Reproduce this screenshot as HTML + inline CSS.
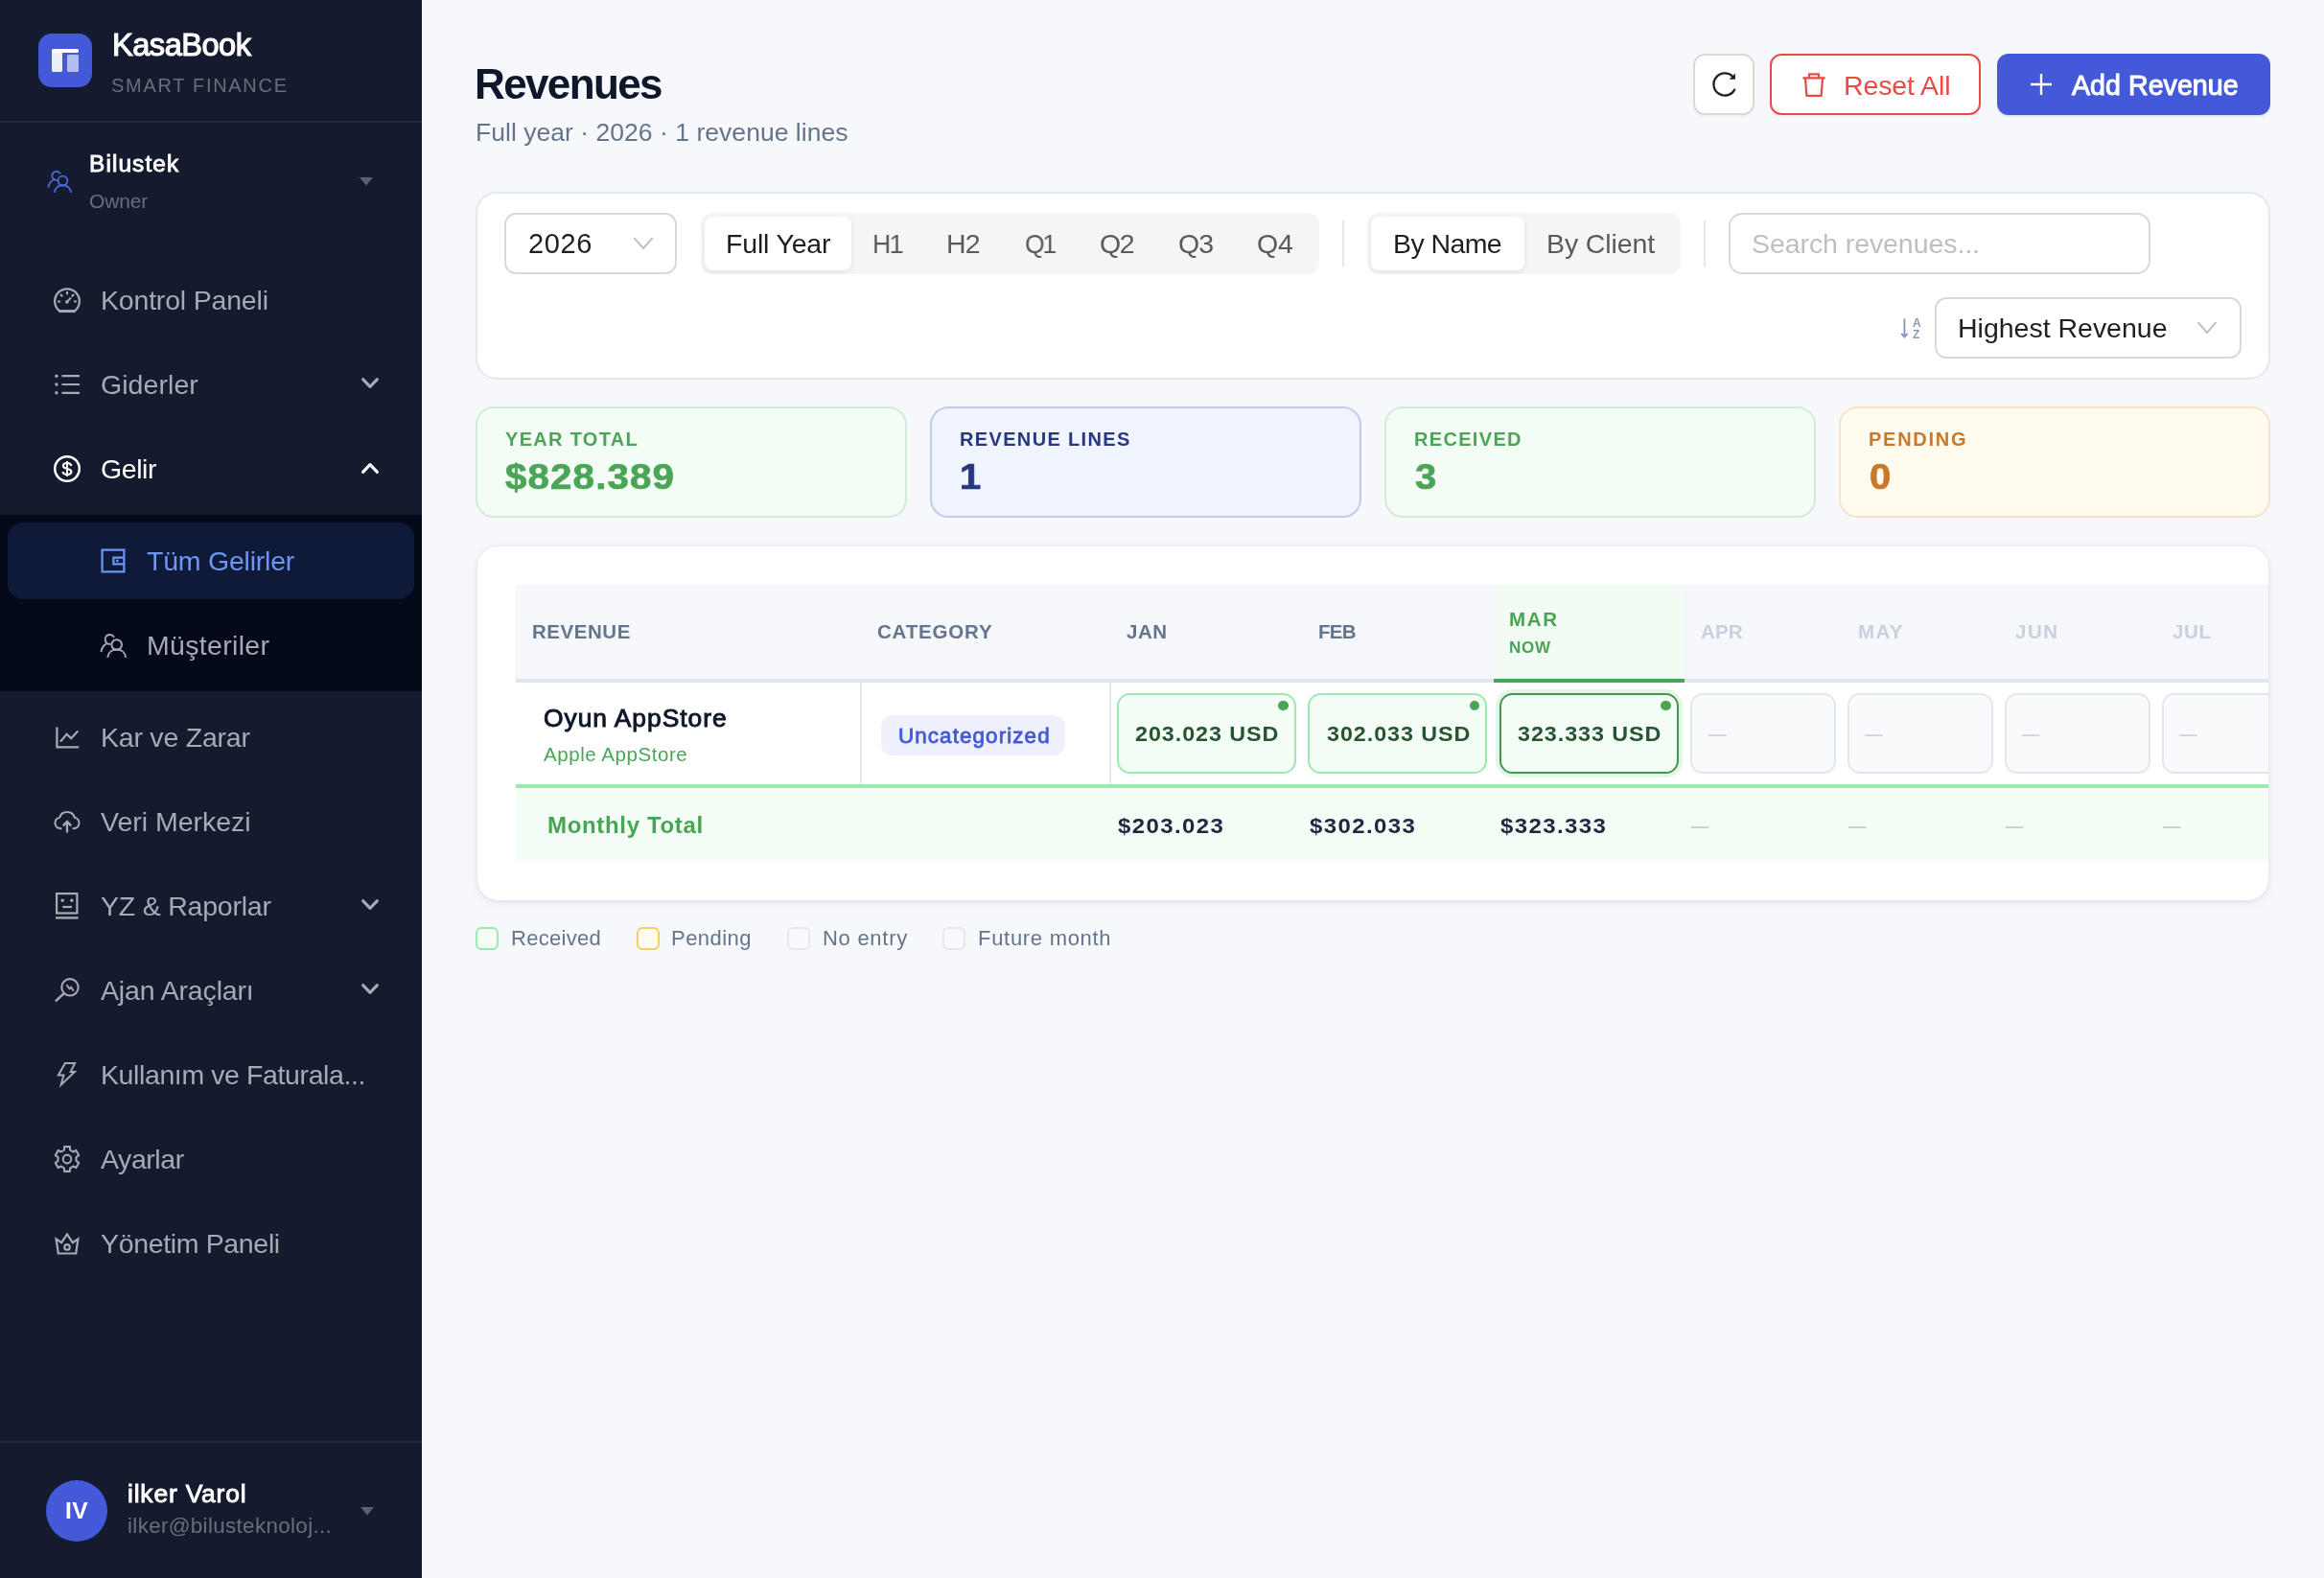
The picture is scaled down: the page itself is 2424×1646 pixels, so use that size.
<!DOCTYPE html><html lang="tr"><head><meta charset="utf-8"><title>KasaBook - Revenues</title><style>
html,body{margin:0;padding:0}
body{width:2424px;height:1646px;overflow:hidden;background:#f7f8fc;position:relative;font-family:"Liberation Sans",sans-serif;}
#side{position:absolute;left:0;top:0;width:440px;height:1646px;background:#151b2e;overflow:hidden}
#main{position:absolute;left:0;top:0;width:2424px;height:1646px;}
.t{position:absolute;white-space:nowrap;display:block;will-change:transform}
.ic{display:block;overflow:visible}
.chev{display:block}
#t1{letter-spacing:-0.502px}#t2{letter-spacing:1.698px}#t3{letter-spacing:1.113px}#t4{letter-spacing:-0.14px}#t5{letter-spacing:-0.189px}#t6{letter-spacing:0.061px}#t7{letter-spacing:-0.422px}#t8{letter-spacing:-0.224px}#t9{letter-spacing:0.321px}#t10{letter-spacing:-0.226px}#t11{letter-spacing:-0.009px}#t12{letter-spacing:-0.214px}#t13{letter-spacing:-0.149px}#t14{letter-spacing:-0.393px}#t15{letter-spacing:-0.428px}#t16{letter-spacing:-0.346px}#t17{letter-spacing:0.35px}#t18{letter-spacing:0.822px}#t19{letter-spacing:0.339px}#t20{letter-spacing:-1.627px}#t21{letter-spacing:0.033px}#t22{letter-spacing:-0.123px}#t23{letter-spacing:0.032px}#t24{letter-spacing:0.595px}#t25{letter-spacing:-0.178px}#t26{letter-spacing:-1.706px}#t27{letter-spacing:-0.737px}#t28{letter-spacing:-2.332px}#t29{letter-spacing:-1.531px}#t30{letter-spacing:-1.031px}#t31{letter-spacing:-0.231px}#t32{letter-spacing:-0.584px}#t33{letter-spacing:-0.106px}#t34{letter-spacing:-0.072px}#t37{letter-spacing:-0.01px}#t38{letter-spacing:1.307px}#t39{letter-spacing:1.02px}#t40{letter-spacing:1.345px}#t42{letter-spacing:1.321px}#t44{letter-spacing:1.729px}#t46{letter-spacing:0.548px}#t47{letter-spacing:0.813px}#t48{letter-spacing:0.492px}#t49{letter-spacing:-0.7px}#t50{letter-spacing:1.656px}#t51{letter-spacing:0.727px}#t52{letter-spacing:0.102px}#t53{letter-spacing:1.406px}#t54{letter-spacing:1.492px}#t55{letter-spacing:0.633px}#t56{letter-spacing:0.967px}#t57{letter-spacing:0.555px}#t58{letter-spacing:1.101px}#t59{letter-spacing:0.885px}#t60{letter-spacing:0.885px}#t61{letter-spacing:0.885px}#t66{letter-spacing:0.666px}#t67{letter-spacing:1.281px}#t68{letter-spacing:1.281px}#t69{letter-spacing:1.281px}#t74{letter-spacing:0.297px}#t75{letter-spacing:0.458px}#t76{letter-spacing:0.721px}#t77{letter-spacing:0.705px}</style></head><body><div id="side">
<div style="position:absolute;left:40px;top:35px;width:56px;height:56px;background:#4459d8;border-radius:14px;"><div style="position:absolute;left:14px;top:16px;width:28px;height:4.4px;background:#fff;border-radius:1.5px 1.5px 1.5px 0"></div><div style="position:absolute;left:14px;top:19.5px;width:11.2px;height:20.3px;background:#eceefc;border-radius:0 0 1.5px 1.5px"></div><div style="position:absolute;left:30px;top:22.3px;width:12px;height:17.5px;background:#b4bcf0;border-radius:1.5px"></div></div>
<span id="t1" class="t" style="left:116.9px;top:30.90px;font-size:32.6px;line-height:32.6px;font-weight:400;color:#fff;-webkit-text-stroke:1.11px #fff;">KasaBook</span>
<span id="t2" class="t" style="left:115.9px;top:79.07px;font-size:20px;line-height:20px;font-weight:400;color:#6a6e7c;">SMART FINANCE</span>
<div style="position:absolute;left:0px;top:126px;width:440px;height:2px;background:#262c3f"></div>
<div style="position:absolute;left:48.8px;top:175.8px;width:26px;height:26px;color:#4c68e0"><svg class="ic" width="26" height="26" viewBox="0 0 28 28" fill="none" stroke="currentColor" stroke-width="2.0" stroke-linecap="butt" stroke-linejoin="miter" ><circle cx="17.7" cy="13.5" r="5.3"/><path d="M8.300 26.800c.6-5.300 4.600-8.200 9.400-8.200s8.800 2.900 9.400 8.200"/><path d="M15.040 5.830A4.900 4.900 0 1 0 11.450 12.730"/><path d="M1.500 21c.5-3.900 2.400-6.800 5.400-8.400"/></svg></div>
<span id="t3" class="t" style="left:93px;top:158.95px;font-size:24.4px;line-height:24.4px;font-weight:400;color:#fff;-webkit-text-stroke:0.83px #fff;">Bilustek</span>
<span id="t4" class="t" style="left:92.7px;top:199.22px;font-size:21px;line-height:21px;font-weight:400;color:#6a6e7c;">Owner</span>
<svg style="position:absolute;left:375px;top:184.5px" width="14" height="9" viewBox="0 0 14 9"><path d="M0 0h14L7 8.6z" fill="#5c6172"/></svg>
<div style="position:absolute;left:56px;top:299px;width:28px;height:28px;color:#a7aab4"><svg class="ic" width="28" height="28" viewBox="0 0 28 28" fill="none" stroke="currentColor" stroke-width="2.1" stroke-linecap="butt" stroke-linejoin="miter" ><path d="M6.06 25.3 A12.85 12.85 0 1 1 21.94 25.3 Z" stroke-linejoin="round" stroke-width="2.3"/><path d="M5.6 25.7H22.4" stroke-width="2.7"/><path d="M14 5.1v3.2M7 8l2.2 2.2M21 8l-2.2 2.2M4.1 15.5h2.9M23.9 15.5h-2.9" stroke-width="2.1"/><path d="M13.8 16l4.3-4.6" stroke-width="1.9"/><circle cx="13.9" cy="15.9" r="1.8" fill="currentColor" stroke="none"/></svg></div><span id="t5" class="t" style="left:105.2px;top:299.17px;font-size:28.5px;line-height:28.5px;font-weight:400;color:#a7aab4;">Kontrol Paneli</span>
<div style="position:absolute;left:56px;top:387px;width:28px;height:28px;color:#a7aab4"><svg class="ic" width="28" height="28" viewBox="0 0 28 28" fill="none" stroke="currentColor" stroke-width="2.1" stroke-linecap="butt" stroke-linejoin="miter" ><path d="M8.5 5.2H27M8.5 14H27M8.5 22.8H27" stroke-width="2.2"/><circle cx="2.9" cy="5.2" r="1.7" fill="currentColor" stroke="none"/><circle cx="2.9" cy="14" r="1.7" fill="currentColor" stroke="none"/><circle cx="2.9" cy="22.8" r="1.7" fill="currentColor" stroke="none"/></svg></div><span id="t6" class="t" style="left:105.2px;top:387.17px;font-size:28.5px;line-height:28.5px;font-weight:400;color:#a7aab4;">Giderler</span><div style="position:absolute;left:376px;top:392.5px;color:#a7aab4"><svg class="chev" width="20" height="14" viewBox="0 0 20 14" fill="none" stroke="currentColor" stroke-width="3.1" stroke-linecap="round" stroke-linejoin="round"><path d="M2.6 2.6L10 10.4 17.4 2.6"/></svg></div>
<div style="position:absolute;left:56px;top:475px;width:28px;height:28px;color:#fff"><svg class="ic" width="28" height="28" viewBox="0 0 28 28" fill="none" stroke="currentColor" stroke-width="2.1" stroke-linecap="butt" stroke-linejoin="miter" ><circle cx="14" cy="14" r="12.75" stroke-width="2.5"/><path d="M18.4 10.9C18 9 16.3 8 14 8c-2.5 0-4.100 1.200-4.100 3 0 4 8.500 2 8.500 6 0 1.900-1.800 3-4.400 3-2.500 0-4.100-1-4.400-2.900" stroke-width="2.2"/><path d="M14 6v16" stroke-width="1.9"/></svg></div><span id="t7" class="t" style="left:105.2px;top:475.17px;font-size:28.5px;line-height:28.5px;font-weight:400;color:#fff;">Gelir</span><div style="position:absolute;left:376px;top:480.5px;color:#fff"><svg class="chev" width="20" height="14" viewBox="0 0 20 14" fill="none" stroke="currentColor" stroke-width="3.1" stroke-linecap="round" stroke-linejoin="round"><path d="M2.6 11.4L10 3.6 17.4 11.4"/></svg></div>
<div style="position:absolute;left:0px;top:537px;width:440px;height:184px;background:#040a19"></div>
<div style="position:absolute;left:8px;top:545px;width:424px;height:80px;background:#0f1938;border-radius:16px"></div>
<div style="position:absolute;left:104px;top:571px;width:28px;height:28px;color:#7096f5"><svg class="ic" width="28" height="28" viewBox="0 0 28 28" fill="none" stroke="currentColor" stroke-width="2.1" stroke-linecap="butt" stroke-linejoin="miter" ><rect x="2.6" y="2.6" width="22.8" height="22.8" stroke-width="2.2"/><path d="M25.4 10.6H14.4v6.8h11" stroke-width="2.2"/><circle cx="18.4" cy="14" r="1.4" fill="currentColor" stroke="none"/></svg></div><span id="t8" class="t" style="left:153.2px;top:571.17px;font-size:28.5px;line-height:28.5px;font-weight:400;color:#7096f5;">Tüm Gelirler</span>
<div style="position:absolute;left:104px;top:659px;width:28px;height:28px;color:#a7aab4"><svg class="ic" width="28" height="28" viewBox="0 0 28 28" fill="none" stroke="currentColor" stroke-width="2.0" stroke-linecap="butt" stroke-linejoin="miter" ><circle cx="17.7" cy="13.5" r="5.3"/><path d="M8.300 26.800c.6-5.300 4.600-8.200 9.400-8.200s8.800 2.900 9.400 8.200"/><path d="M15.040 5.830A4.900 4.900 0 1 0 11.450 12.730"/><path d="M1.500 21c.5-3.900 2.400-6.800 5.400-8.400"/></svg></div><span id="t9" class="t" style="left:153.2px;top:659.17px;font-size:28.5px;line-height:28.5px;font-weight:400;color:#a7aab4;">Müşteriler</span>
<div style="position:absolute;left:56px;top:755px;width:28px;height:28px;color:#a7aab4"><svg class="ic" width="28" height="28" viewBox="0 0 28 28" fill="none" stroke="currentColor" stroke-width="2.1" stroke-linecap="butt" stroke-linejoin="miter" ><path d="M3.400 3.600V24.400H26.200" stroke-width="2.2"/><path d="M7 18.600l6.600-7.800 4.600 4.400 7-7.600" stroke-width="2.2"/></svg></div><span id="t10" class="t" style="left:105.2px;top:755.17px;font-size:28.5px;line-height:28.5px;font-weight:400;color:#a7aab4;">Kar ve Zarar</span>
<div style="position:absolute;left:56px;top:843px;width:28px;height:28px;color:#a7aab4"><svg class="ic" width="28" height="28" viewBox="0 0 28 28" fill="none" stroke="currentColor" stroke-width="2.1" stroke-linecap="butt" stroke-linejoin="miter" ><path d="M8.400 21.200H7.200a5.800 5.800 0 0 1-1-11.500 8.200 8.200 0 0 1 15.600 0 5.800 5.800 0 0 1-1 11.500h-1.200" stroke-linejoin="round"/><path d="M14 25.400V15.400M9.800 18.400l4.200-4.400 4.200 4.400" stroke-width="2.3"/></svg></div><span id="t11" class="t" style="left:105.2px;top:843.17px;font-size:28.5px;line-height:28.5px;font-weight:400;color:#a7aab4;">Veri Merkezi</span>
<div style="position:absolute;left:56px;top:931px;width:28px;height:28px;color:#a7aab4"><svg class="ic" width="28" height="28" viewBox="0 0 28 28" fill="none" stroke="currentColor" stroke-width="2.1" stroke-linecap="butt" stroke-linejoin="miter" ><rect x="3.1" y="1.1" width="21.3" height="20.4" stroke-width="2.2"/><path d="M2 26.400h23.600" stroke-width="2.400"/><path d="M9.200 15h9.800" stroke-width="2.200"/><circle cx="9.200" cy="8.200" r="1.750" fill="currentColor" stroke="none"/><circle cx="18.800" cy="8.200" r="1.750" fill="currentColor" stroke="none"/></svg></div><span id="t12" class="t" style="left:105.2px;top:931.17px;font-size:28.5px;line-height:28.5px;font-weight:400;color:#a7aab4;">YZ &amp; Raporlar</span><div style="position:absolute;left:376px;top:936.5px;color:#a7aab4"><svg class="chev" width="20" height="14" viewBox="0 0 20 14" fill="none" stroke="currentColor" stroke-width="3.1" stroke-linecap="round" stroke-linejoin="round"><path d="M2.6 2.6L10 10.4 17.4 2.6"/></svg></div>
<div style="position:absolute;left:56px;top:1019px;width:28px;height:28px;color:#a7aab4"><svg class="ic" width="28" height="28" viewBox="0 0 28 28" fill="none" stroke="currentColor" stroke-width="2.1" stroke-linecap="butt" stroke-linejoin="miter" ><circle cx="17" cy="10.800" r="8.700" stroke-width="2.100"/><path d="M10.800 17.200L1.900 25.300" stroke-width="2.500"/><path d="M13.400 8.300l3 4 1.600-1.600 2.900 4" stroke-width="1.900"/></svg></div><span id="t13" class="t" style="left:105.2px;top:1019.17px;font-size:28.5px;line-height:28.5px;font-weight:400;color:#a7aab4;">Ajan Araçları</span><div style="position:absolute;left:376px;top:1024.5px;color:#a7aab4"><svg class="chev" width="20" height="14" viewBox="0 0 20 14" fill="none" stroke="currentColor" stroke-width="3.1" stroke-linecap="round" stroke-linejoin="round"><path d="M2.6 2.6L10 10.4 17.4 2.6"/></svg></div>
<div style="position:absolute;left:56px;top:1107px;width:28px;height:28px;color:#a7aab4"><svg class="ic" width="28" height="28" viewBox="0 0 28 28" fill="none" stroke="currentColor" stroke-width="2.1" stroke-linecap="butt" stroke-linejoin="miter" ><path d="M11.900 2.100H22.100L17.700 10.900H21.900L7.700 24.600 10.400 14.600H4.900z" stroke-linejoin="miter" stroke-width="2"/></svg></div><span id="t14" class="t" style="left:105.2px;top:1107.17px;font-size:28.5px;line-height:28.5px;font-weight:400;color:#a7aab4;">Kullanım ve Faturala...</span>
<div style="position:absolute;left:56px;top:1195px;width:28px;height:28px;color:#a7aab4"><svg class="ic" width="28" height="28" viewBox="0 0 28 28" fill="none" stroke="currentColor" stroke-width="2.1" stroke-linecap="butt" stroke-linejoin="miter" ><g transform="translate(14 0) scale(0.965 1) translate(-14 0)"><path d="M10.74 4.54 L11.02 1.09 L16.98 1.09 L17.26 4.54 L20.56 6.45 L23.69 4.96 L26.67 10.13 L23.82 12.09 L23.82 15.91 L26.67 17.87 L23.69 23.04 L20.56 21.55 L17.26 23.46 L16.98 26.91 L11.02 26.91 L10.74 23.46 L7.44 21.55 L4.31 23.04 L1.33 17.87 L4.18 15.91 L4.18 12.09 L1.33 10.13 L4.31 4.96 L7.44 6.45Z" stroke-linejoin="round" stroke-width="2.1"/><circle cx="14" cy="14" r="4.400" stroke-width="2.100"/></g></svg></div><span id="t15" class="t" style="left:105.2px;top:1195.17px;font-size:28.5px;line-height:28.5px;font-weight:400;color:#a7aab4;">Ayarlar</span>
<div style="position:absolute;left:56px;top:1283px;width:28px;height:28px;color:#a7aab4"><svg class="ic" width="28" height="28" viewBox="0 0 28 28" fill="none" stroke="currentColor" stroke-width="2.1" stroke-linecap="butt" stroke-linejoin="miter" ><path d="M2.600 9.400l5.600 3.800L14 4.400l5.800 8.800 5.600-3.800-2.200 15.100H4.800z" stroke-linejoin="miter" stroke-width="2.200"/><circle cx="14" cy="17.900" r="2.750" stroke-width="2.200"/></svg></div><span id="t16" class="t" style="left:105.2px;top:1283.17px;font-size:28.5px;line-height:28.5px;font-weight:400;color:#a7aab4;">Yönetim Paneli</span>
<div style="position:absolute;left:0px;top:1503px;width:440px;height:2px;background:#262c3f"></div>
<div style="position:absolute;left:48px;top:1544px;width:64px;height:64px;background:#4459d8;border-radius:50%"></div>
<span id="t17" class="t" style="left:68.3px;top:1563.98px;font-size:24.6px;line-height:24.6px;font-weight:700;color:#fff;">IV</span>
<span id="t18" class="t" style="left:133px;top:1544.65px;font-size:26.4px;line-height:26.4px;font-weight:400;color:#fff;-webkit-text-stroke:0.90px #fff;">ilker Varol</span>
<span id="t19" class="t" style="left:132.7px;top:1581.44px;font-size:22.4px;line-height:22.4px;font-weight:400;color:#6a6e7c;">ilker@bilusteknoloj...</span>
<svg style="position:absolute;left:375.5px;top:1572px" width="14" height="9" viewBox="0 0 14 9"><path d="M0 0h14L7 8.6z" fill="#5c6172"/></svg>
</div>
<div id="main">
<span id="t20" class="t" style="left:495.2px;top:66.05px;font-size:44px;line-height:44px;font-weight:700;color:#0f172a;">Revenues</span>
<span id="t21" class="t" style="left:495.9px;top:125.17px;font-size:26.5px;line-height:26.5px;font-weight:400;color:#64748b;">Full year · 2026 · 1 revenue lines</span>
<div style="position:absolute;left:1766px;top:56px;width:64px;height:64px;background:#fff;border:2px solid #d9d9d9;border-radius:12px;box-sizing:border-box;box-shadow:0 2px 0 rgba(0,0,0,.03)"><svg style="position:absolute;left:15.5px;top:15px" width="30" height="30" viewBox="0 0 30 30" fill="none" stroke="#1f1f1f" stroke-width="2.3"><path d="M25.6 19.8A11.6 11.6 0 1 1 23.6 7.2"/><path d="M25.9 3.6v6.2h-6.2z" fill="#1f1f1f" stroke="none"/></svg></div>
<div style="position:absolute;left:1846px;top:56px;width:220px;height:64px;background:#fff;border:2px solid #e64b45;border-radius:12px;box-sizing:border-box;box-shadow:0 2px 0 rgba(229,80,79,.08)"><svg style="position:absolute;left:31px;top:17px" width="26" height="28" viewBox="0 0 26 28" fill="none" stroke="#e64b45" stroke-width="2.2"><path d="M1.4 6.4h23.2M8 6V2.4h10V6M4 6.600l1.400 18.300h15.200l1.400-18.300" stroke-linejoin="round"/></svg></div>
<span id="t22" class="t" style="left:1922.6px;top:75.17px;font-size:28.5px;line-height:28.5px;font-weight:400;color:#e64b45;">Reset All</span>
<div style="position:absolute;left:2083px;top:56px;width:285px;height:64px;background:#4459d8;border-radius:12px;box-shadow:0 2px 0 rgba(68,89,216,.12)"><svg style="position:absolute;left:34px;top:20px" width="24" height="24" viewBox="0 0 24 24" stroke="#fff" stroke-width="2.3"><path d="M12 1v22M1 12h22"/></svg></div>
<span id="t23" class="t" style="left:2161.4px;top:74.99px;font-size:28.6px;line-height:28.6px;font-weight:400;color:#fff;-webkit-text-stroke:1.03px #fff;">Add Revenue</span>
<div style="position:absolute;left:496px;top:200px;width:1872px;height:196px;background:#fff;border:2px solid #e3e8f1;border-radius:22px;box-sizing:border-box"></div>
<div style="position:absolute;left:526px;top:222px;width:180px;height:64px;background:#fff;border:2px solid #d9d9d9;border-radius:12px;box-sizing:border-box"></div>
<span id="t24" class="t" style="left:550.8px;top:239.85px;font-size:29px;line-height:29px;font-weight:400;color:#1f1f1f;">2026</span>
<svg style="position:absolute;left:660px;top:247px" width="22" height="14" viewBox="0 0 22 14" fill="none" stroke="#bfbfbf" stroke-width="2"><path d="M1.5 1.2L11 12 20.5 1.2"/></svg>
<div style="position:absolute;left:731px;top:222px;width:645px;height:64px;background:#f5f5f5;border-radius:12px"></div>
<div style="position:absolute;left:735px;top:226px;width:153px;height:56px;background:#fff;border-radius:8px;box-shadow:0 2px 4px rgba(0,0,0,.05),0 2px 12px -2px rgba(0,0,0,.06)"></div>
<span id="t25" class="t" style="left:757px;top:240.37px;font-size:28.5px;line-height:28.5px;font-weight:400;color:#1f1f1f;">Full Year</span>
<span id="t26" class="t" style="left:910.3px;top:240.37px;font-size:28.5px;line-height:28.5px;font-weight:400;color:#5a5a5a;transform:scaleX(0.93);transform-origin:0 50%;">H1</span>
<span id="t27" class="t" style="left:987.3px;top:240.37px;font-size:28.5px;line-height:28.5px;font-weight:400;color:#5a5a5a;">H2</span>
<span id="t28" class="t" style="left:1068.6px;top:240.37px;font-size:28.5px;line-height:28.5px;font-weight:400;color:#5a5a5a;transform:scaleX(0.93);transform-origin:0 50%;">Q1</span>
<span id="t29" class="t" style="left:1146.5px;top:240.37px;font-size:28.5px;line-height:28.5px;font-weight:400;color:#5a5a5a;">Q2</span>
<span id="t30" class="t" style="left:1228.7px;top:240.37px;font-size:28.5px;line-height:28.5px;font-weight:400;color:#5a5a5a;">Q3</span>
<span id="t31" class="t" style="left:1311px;top:240.37px;font-size:28.5px;line-height:28.5px;font-weight:400;color:#5a5a5a;">Q4</span>
<div style="position:absolute;left:1399.5px;top:230px;width:2px;height:48px;background:#e6e6e6"></div>
<div style="position:absolute;left:1426px;top:222px;width:327px;height:64px;background:#f5f5f5;border-radius:12px"></div>
<div style="position:absolute;left:1430px;top:226px;width:160px;height:56px;background:#fff;border-radius:8px;box-shadow:0 2px 4px rgba(0,0,0,.05),0 2px 12px -2px rgba(0,0,0,.06)"></div>
<span id="t32" class="t" style="left:1452.9px;top:240.37px;font-size:28.5px;line-height:28.5px;font-weight:400;color:#1f1f1f;">By Name</span>
<span id="t33" class="t" style="left:1612.8px;top:240.37px;font-size:28.5px;line-height:28.5px;font-weight:400;color:#5a5a5a;">By Client</span>
<div style="position:absolute;left:1777px;top:230px;width:2px;height:48px;background:#e6e6e6"></div>
<div style="position:absolute;left:1803px;top:222px;width:440px;height:64px;background:#fff;border:2px solid #d9d9d9;border-radius:14px;box-sizing:border-box"></div>
<span id="t34" class="t" style="left:1827.4px;top:240.37px;font-size:28.5px;line-height:28.5px;font-weight:400;color:#bfbfbf;">Search revenues...</span>
<svg style="position:absolute;left:1982px;top:330px" width="22" height="24" viewBox="0 0 22 24" fill="none" stroke="#8a99b3" stroke-width="1.9"><path d="M4.4 2.600v18.600M1.200 17.800l3.200 3.700 3.200-3.700"/></svg>
<span id="t35" class="t" style="left:1994.6px;top:331.04px;font-size:12px;line-height:12px;font-weight:700;color:#8a99b3;">A</span>
<span id="t36" class="t" style="left:1995px;top:342.64px;font-size:12px;line-height:12px;font-weight:700;color:#8a99b3;">Z</span>
<div style="position:absolute;left:2018px;top:310px;width:320px;height:64px;background:#fff;border:2px solid #d9d9d9;border-radius:12px;box-sizing:border-box"></div>
<span id="t37" class="t" style="left:2042.4px;top:328.37px;font-size:28.5px;line-height:28.5px;font-weight:400;color:#1f1f1f;">Highest Revenue</span>
<svg style="position:absolute;left:2291px;top:335px" width="22" height="14" viewBox="0 0 22 14" fill="none" stroke="#bfbfbf" stroke-width="2"><path d="M1.5 1.2L11 12 20.5 1.2"/></svg>
<div style="position:absolute;left:496px;top:424px;width:450px;height:116px;background:#f3fcf5;border:2px solid #d1ebd7;border-radius:19px;box-sizing:border-box"></div>
<span id="t38" class="t" style="left:527px;top:448.47px;font-size:20px;line-height:20px;font-weight:700;color:#4aa556;">YEAR TOTAL</span>
<span id="t39" class="t" style="left:527.3px;top:479.48px;font-size:37px;line-height:37px;font-weight:700;color:#4aa556;-webkit-text-stroke:0.7px #4aa556;transform:scaleX(1.09);transform-origin:0 50%;">$828.389</span>
<div style="position:absolute;left:970px;top:424px;width:450px;height:116px;background:#f0f4fe;border:2px solid #c3cbe8;border-radius:19px;box-sizing:border-box"></div>
<span id="t40" class="t" style="left:1001px;top:448.47px;font-size:20px;line-height:20px;font-weight:700;color:#26377f;">REVENUE LINES</span>
<span id="t41" class="t" style="left:1001px;top:479.48px;font-size:37px;line-height:37px;font-weight:700;color:#26377f;-webkit-text-stroke:0.7px #26377f;transform:scaleX(1.08);transform-origin:0 50%;">1</span>
<div style="position:absolute;left:1444px;top:424px;width:450px;height:116px;background:#f3fcf5;border:2px solid #d1ebd7;border-radius:19px;box-sizing:border-box"></div>
<span id="t42" class="t" style="left:1475px;top:448.47px;font-size:20px;line-height:20px;font-weight:700;color:#4aa556;">RECEIVED</span>
<span id="t43" class="t" style="left:1475.5px;top:479.48px;font-size:37px;line-height:37px;font-weight:700;color:#4aa556;-webkit-text-stroke:0.7px #4aa556;transform:scaleX(1.08);transform-origin:0 50%;">3</span>
<div style="position:absolute;left:1918px;top:424px;width:450px;height:116px;background:#fffbef;border:2px solid #f8e3c8;border-radius:19px;box-sizing:border-box"></div>
<span id="t44" class="t" style="left:1949px;top:448.47px;font-size:20px;line-height:20px;font-weight:700;color:#c8782b;">PENDING</span>
<span id="t45" class="t" style="left:1949.5px;top:479.48px;font-size:37px;line-height:37px;font-weight:700;color:#c8782b;-webkit-text-stroke:0.7px #c8782b;transform:scaleX(1.08);transform-origin:0 50%;">0</span>
<div style="position:absolute;left:497px;top:569px;width:1870px;height:371px;background:#fff;border:1px solid #e6e9f2;border-radius:23px;box-sizing:border-box;box-shadow:0 1px 3px rgba(30,41,90,.07),0 3px 10px rgba(30,41,90,.05);overflow:hidden"><div id="tbl"></div></div>
<div style="position:absolute;left:538px;top:610px;width:1828px;height:290px;overflow:hidden">
<div style="position:absolute;left:0px;top:0px;width:1830px;height:98.5px;background:#f6f7fb"></div>
<div style="position:absolute;left:1019.8px;top:0px;width:199.4px;height:98.5px;background:#f2fcf4"></div>
<div style="position:absolute;left:0px;top:97.79999999999995px;width:1830px;height:3.8px;background:#e1e6ed"></div>
<div style="position:absolute;left:1019.8px;top:97.79999999999995px;width:199.4px;height:4.2px;background:#48a556"></div>
<span id="t46" class="t" style="left:16.899999999999977px;top:38.95px;font-size:20.5px;line-height:20.5px;font-weight:700;color:#64748b;">REVENUE</span>
<span id="t47" class="t" style="left:376.6px;top:38.95px;font-size:20.5px;line-height:20.5px;font-weight:700;color:#64748b;">CATEGORY</span>
<span id="t48" class="t" style="left:637px;top:38.95px;font-size:20.5px;line-height:20.5px;font-weight:700;color:#64748b;">JAN</span>
<span id="t49" class="t" style="left:837px;top:38.95px;font-size:20.5px;line-height:20.5px;font-weight:700;color:#64748b;">FEB</span>
<span id="t50" class="t" style="left:1036.2px;top:26.05px;font-size:20.5px;line-height:20.5px;font-weight:700;color:#48a556;">MAR</span>
<span id="t51" class="t" style="left:1036.2px;top:56.91px;font-size:17px;line-height:17px;font-weight:700;color:#48a556;">NOW</span>
<span id="t52" class="t" style="left:1235.8px;top:38.95px;font-size:20.5px;line-height:20.5px;font-weight:700;color:#c9d0dd;">APR</span>
<span id="t53" class="t" style="left:1399.8px;top:38.95px;font-size:20.5px;line-height:20.5px;font-weight:700;color:#c9d0dd;">MAY</span>
<span id="t54" class="t" style="left:1564.1px;top:38.95px;font-size:20.5px;line-height:20.5px;font-weight:700;color:#c9d0dd;">JUN</span>
<span id="t55" class="t" style="left:1728px;top:38.95px;font-size:20.5px;line-height:20.5px;font-weight:700;color:#c9d0dd;">JUL</span>
<div style="position:absolute;left:358.6px;top:102px;width:2px;height:106px;background:#e6eaf1"></div>
<div style="position:absolute;left:619px;top:102px;width:2px;height:106px;background:#e6eaf1"></div>
<span id="t56" class="t" style="left:29.299999999999955px;top:126.05px;font-size:26.4px;line-height:26.4px;font-weight:400;color:#0f172a;-webkit-text-stroke:0.95px #0f172a;">Oyun AppStore</span>
<span id="t57" class="t" style="left:29px;top:167.15px;font-size:20.5px;line-height:20.5px;font-weight:400;color:#4aa556;">Apple AppStore</span>
<div style="position:absolute;left:381px;top:136.29999999999995px;width:192px;height:41.4px;background:#eef0fd;border-radius:12px"></div>
<span id="t58" class="t" style="left:398.6px;top:146.94px;font-size:22.4px;line-height:22.4px;font-weight:400;color:#4459d8;-webkit-text-stroke:0.81px #4459d8;">Uncategorized</span>
<div style="position:absolute;left:627px;top:113px;width:187px;height:83.8px;background:#f4fcf6;border:2px solid #9ce9b0;border-radius:13.5px;box-sizing:border-box;"></div>
<div style="position:absolute;left:795.4000000000001px;top:120.79999999999995px;width:10.2px;height:10.2px;background:#48a556;border-radius:50%"></div>
<span id="t59" class="t" style="left:646.2px;top:145.38px;font-size:22px;line-height:22px;font-weight:700;color:#265430;transform:scaleX(1.06);transform-origin:0 50%;">203.023 USD</span>
<div style="position:absolute;left:826.4000000000001px;top:113px;width:187px;height:83.8px;background:#f4fcf6;border:2px solid #9ce9b0;border-radius:13.5px;box-sizing:border-box;"></div>
<div style="position:absolute;left:994.8000000000002px;top:120.79999999999995px;width:10.2px;height:10.2px;background:#48a556;border-radius:50%"></div>
<span id="t60" class="t" style="left:845.6000000000001px;top:145.38px;font-size:22px;line-height:22px;font-weight:700;color:#265430;transform:scaleX(1.06);transform-origin:0 50%;">302.033 USD</span>
<div style="position:absolute;left:1026px;top:113px;width:187px;height:83.8px;background:#f4fcf6;border:2px solid #3d9a4a;border-radius:13.5px;box-sizing:border-box;box-shadow:0 0 0 4px rgba(72,165,86,.13);"></div>
<div style="position:absolute;left:1194.4px;top:120.79999999999995px;width:10.2px;height:10.2px;background:#48a556;border-radius:50%"></div>
<span id="t61" class="t" style="left:1045.2px;top:145.38px;font-size:22px;line-height:22px;font-weight:700;color:#265430;transform:scaleX(1.06);transform-origin:0 50%;">323.333 USD</span>
<div style="position:absolute;left:1225.2px;top:113px;width:151.5px;height:83.8px;background:#f9fafc;border:2px solid #e2e6ef;border-radius:13px;box-sizing:border-box"></div>
<span id="t62" class="t" style="left:1243.5px;top:146.62px;font-size:18.4px;line-height:18.4px;font-weight:700;color:#cfd5e0;">—</span>
<div style="position:absolute;left:1389.1px;top:113px;width:151.5px;height:83.8px;background:#f9fafc;border:2px solid #e2e6ef;border-radius:13px;box-sizing:border-box"></div>
<span id="t63" class="t" style="left:1407.3999999999999px;top:146.62px;font-size:18.4px;line-height:18.4px;font-weight:700;color:#cfd5e0;">—</span>
<div style="position:absolute;left:1553px;top:113px;width:151.5px;height:83.8px;background:#f9fafc;border:2px solid #e2e6ef;border-radius:13px;box-sizing:border-box"></div>
<span id="t64" class="t" style="left:1571.3000000000002px;top:146.62px;font-size:18.4px;line-height:18.4px;font-weight:700;color:#cfd5e0;">—</span>
<div style="position:absolute;left:1716.9px;top:113px;width:151.5px;height:83.8px;background:#f9fafc;border:2px solid #e2e6ef;border-radius:13px;box-sizing:border-box"></div>
<span id="t65" class="t" style="left:1735.2000000000003px;top:146.62px;font-size:18.4px;line-height:18.4px;font-weight:700;color:#cfd5e0;">—</span>
<div style="position:absolute;left:0px;top:208px;width:1830px;height:3.8px;background:#9ce9b0"></div>
<div style="position:absolute;left:0px;top:211.79999999999995px;width:1830px;height:77.5px;background:#f3fcf5"></div>
<span id="t66" class="t" style="left:32.799999999999955px;top:238.68px;font-size:24px;line-height:24px;font-weight:700;color:#48a556;">Monthly Total</span>
<span id="t67" class="t" style="left:627.5px;top:240.68px;font-size:22px;line-height:22px;font-weight:700;color:#1e2640;transform:scaleX(1.09);transform-origin:0 50%;">$203.023</span>
<span id="t68" class="t" style="left:827.5px;top:240.68px;font-size:22px;line-height:22px;font-weight:700;color:#1e2640;transform:scaleX(1.09);transform-origin:0 50%;">$302.033</span>
<span id="t69" class="t" style="left:1027.1px;top:240.68px;font-size:22px;line-height:22px;font-weight:700;color:#1e2640;transform:scaleX(1.09);transform-origin:0 50%;">$323.333</span>
<span id="t70" class="t" style="left:1226px;top:242.92px;font-size:18.4px;line-height:18.4px;font-weight:700;color:#c5cdd9;">—</span>
<span id="t71" class="t" style="left:1389.9px;top:242.92px;font-size:18.4px;line-height:18.4px;font-weight:700;color:#c5cdd9;">—</span>
<span id="t72" class="t" style="left:1553.9px;top:242.92px;font-size:18.4px;line-height:18.4px;font-weight:700;color:#c5cdd9;">—</span>
<span id="t73" class="t" style="left:1717.8000000000002px;top:242.92px;font-size:18.4px;line-height:18.4px;font-weight:700;color:#c5cdd9;">—</span>
</div>
<div style="position:absolute;left:496.4px;top:967px;width:23.5px;height:23.5px;background:#f3fcf5;border:2px solid #9ce9b0;border-radius:6px;box-sizing:border-box"></div>
<span id="t74" class="t" style="left:532.5px;top:967.68px;font-size:22px;line-height:22px;font-weight:400;color:#64748b;">Received</span>
<div style="position:absolute;left:664.2px;top:967px;width:23.5px;height:23.5px;background:#fffbef;border:2px solid #f6cf62;border-radius:6px;box-sizing:border-box"></div>
<span id="t75" class="t" style="left:700.3px;top:967.68px;font-size:22px;line-height:22px;font-weight:400;color:#64748b;">Pending</span>
<div style="position:absolute;left:821.2px;top:967px;width:23.5px;height:23.5px;background:#f8f9fc;border:2px solid #e3e7f0;border-radius:6px;box-sizing:border-box"></div>
<span id="t76" class="t" style="left:857.8px;top:967.68px;font-size:22px;line-height:22px;font-weight:400;color:#64748b;">No entry</span>
<div style="position:absolute;left:983.4px;top:967px;width:23.5px;height:23.5px;background:#f8f9fc;border:2px solid #e3e7f0;border-radius:6px;box-sizing:border-box"></div>
<span id="t77" class="t" style="left:1020px;top:967.68px;font-size:22px;line-height:22px;font-weight:400;color:#64748b;">Future month</span>
</div></body></html>
